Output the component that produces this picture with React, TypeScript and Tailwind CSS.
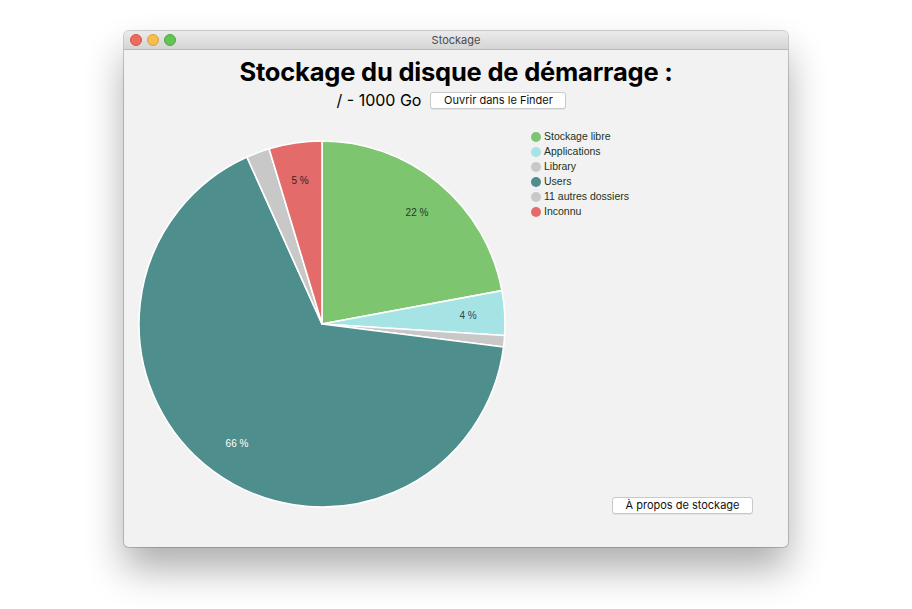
import React from "react";

const CX = 185;
const CY = 185;
const R = 183;

type Slice = { from: number; to: number; color: string };

const slices: Slice[] = [
  { from: 0, to: 79.5, color: "#7dc56f" },
  { from: 79.5, to: 93.6, color: "#a5e3e4" },
  { from: 93.6, to: 97.2, color: "#c8c8c8" },
  { from: 97.2, to: 335.8, color: "#4e8e8c" },
  { from: 335.8, to: 343.2, color: "#c8c8c8" },
  { from: 343.2, to: 360, color: "#e36c6b" },
];

function pt(deg: number) {
  const a = (deg * Math.PI) / 180;
  return [CX + R * Math.sin(a), CY - R * Math.cos(a)];
}

function arc(s: Slice) {
  const [x1, y1] = pt(s.from);
  const [x2, y2] = pt(s.to);
  const large = s.to - s.from > 180 ? 1 : 0;
  return `M ${CX} ${CY} L ${x1} ${y1} A ${R} ${R} 0 ${large} 1 ${x2} ${y2} Z`;
}

const legend = [
  { label: "Stockage libre", color: "#7dc56f" },
  { label: "Applications", color: "#a5e3e4" },
  { label: "Library", color: "#c8c8c8" },
  { label: "Users", color: "#4e8e8c" },
  { label: "11 autres dossiers", color: "#c8c8c8" },
  { label: "Inconnu", color: "#e36c6b" },
];

const font = { fontFamily: "Inter, 'Liberation Sans', sans-serif" };
const arial = { fontFamily: "'Liberation Sans', Arial, sans-serif" };

function MacButton({ label, width }: { label: string; width: string }) {
  return (
    <div
      className={`${width} h-[17px] flex items-center justify-center bg-white border border-[#c9c9c9] rounded-[3px] shadow-[0_1px_0_rgba(0,0,0,0.06)] text-[11px] leading-[15px] text-[#111]`}
    >
      {label}
    </div>
  );
}

export default function App() {
  return (
    <div className="w-[912px] h-[609px] bg-white overflow-hidden pt-[31px] pl-[124px]" style={font}>
      <div className="w-[664px] h-[516px] rounded-[5px] bg-[#f2f2f2] flex flex-col overflow-hidden shadow-[0_0_0_1px_rgba(0,0,0,0.18),0_22px_38px_rgba(0,0,0,0.32)]">
        {/* Title bar */}
        <div className="h-[19px] shrink-0 relative flex items-center justify-center bg-gradient-to-b from-[#ebebeb] to-[#d5d5d5] border-b border-[#b8b8b8]">
          <div className="absolute left-[6px] top-[3px] flex gap-[5px]">
            <span className="w-[12px] h-[12px] rounded-full bg-[#ee6a5f] border border-[#d9564b]" />
            <span className="w-[12px] h-[12px] rounded-full bg-[#f5be4f] border border-[#d9a23e]" />
            <span className="w-[12px] h-[12px] rounded-full bg-[#61c454] border border-[#4fa941]" />
          </div>
          <span className="text-[11px] text-[#4a4a4a] leading-none">Stockage</span>
        </div>

        {/* Content */}
        <div className="flex-1 flex flex-col">
          <div className="flex flex-col items-center pt-[5px]">
            <h1 className="text-[25.5px] leading-[33px] font-bold text-black tracking-[-0.2px]">
              Stockage du disque de démarrage :
            </h1>
            <div className="flex items-center gap-[9px] mt-[2px] ml-[-9px]">
              <span className="text-[16px] leading-[20px] text-black">/ - 1000 Go</span>
              <MacButton label="Ouvrir dans le Finder" width="w-[136px]" />
            </div>
          </div>

          <div className="flex-1 flex">
            <div className="pl-[13px] pt-[29px]">
              <svg width="370" height="370" viewBox="0 0 370 370">
                {slices.map((s, i) => (
                  <path key={i} d={arc(s)} fill={s.color} stroke="#ffffff" strokeWidth="1.6" strokeLinejoin="round" />
                ))}
                <text x="280" y="77" fontSize="10" fill="#2a3a2a" textAnchor="middle" style={arial}>22 %</text>
                <text x="331" y="180" fontSize="10" fill="#2e4a4a" textAnchor="middle" style={arial}>4 %</text>
                <text x="163" y="45" fontSize="10" fill="#3a2020" textAnchor="middle" style={arial}>5 %</text>
                <text x="100" y="308" fontSize="10" fill="#ffffff" textAnchor="middle" style={arial}>66 %</text>
              </svg>
            </div>
            <div className="flex-1 flex flex-col justify-between pl-[24px] pr-[35px] pt-[21px] pb-[33px]">
              <div className="flex flex-col gap-[4px]">
                {legend.map((l) => (
                  <div key={l.label} className="flex items-center h-[11px] gap-[3px]">
                    <span className="w-[10px] h-[10px] rounded-full shrink-0" style={{ backgroundColor: l.color }} />
                    <span className="text-[10.5px] leading-none text-[#1a331a]" style={arial}>{l.label}</span>
                  </div>
                ))}
              </div>
              <div className="flex justify-end">
                <MacButton label="À propos de stockage" width="w-[141px]" />
              </div>
            </div>
          </div>
        </div>
      </div>
    </div>
  );
}
